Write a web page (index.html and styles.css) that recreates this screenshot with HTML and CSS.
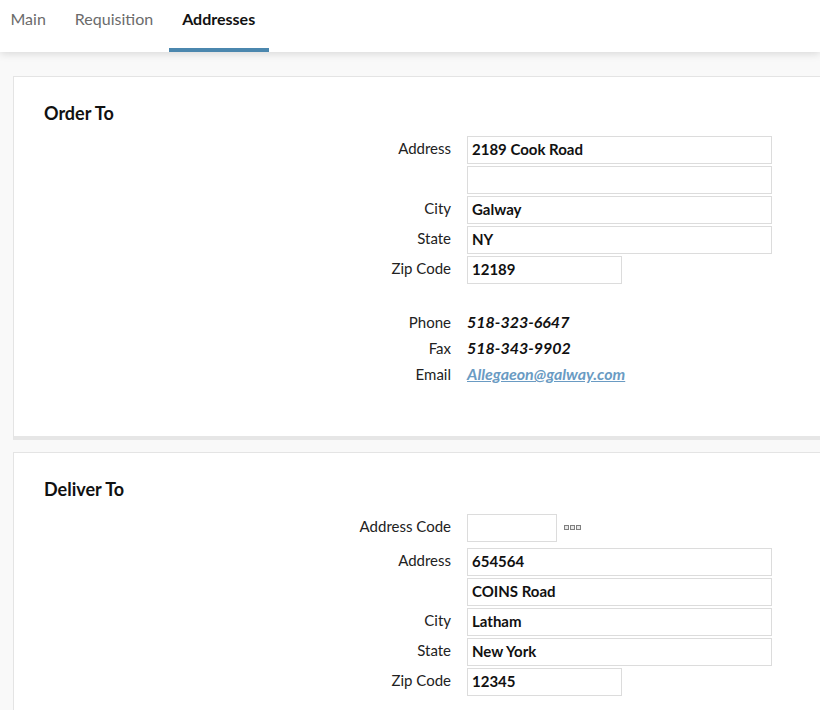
FILE: index.html
```html
<!DOCTYPE html>
<html lang="en">
<head>
<meta charset="utf-8">
<title>Addresses</title>
<link rel="stylesheet" href="styles.css">
</head>
<body>
<nav class="tabs">
  <a class="tab">Main</a>
  <a class="tab">Requisition</a>
  <a class="tab active">Addresses</a>
</nav>
<main class="page">
  <section class="card card-order">
    <h2 class="card-title">Order To</h2>
    <div class="form">
      <div class="row"><label class="lbl">Address</label><div class="field wide">2189 Cook Road</div></div>
      <div class="row"><label class="lbl"></label><div class="field wide"></div></div>
      <div class="row"><label class="lbl">City</label><div class="field wide">Galway</div></div>
      <div class="row"><label class="lbl">State</label><div class="field wide">NY</div></div>
      <div class="row"><label class="lbl">Zip Code</label><div class="field zip">12189</div></div>
    </div>
    <div class="contact">
      <div class="crow"><span class="lbl">Phone</span><span class="val">518-323-6647</span></div>
      <div class="crow"><span class="lbl">Fax</span><span class="val">518-343-9902</span></div>
      <div class="crow"><span class="lbl">Email</span><a class="val link">Allegaeon@galway.com</a></div>
    </div>
  </section>
  <section class="card card-deliver">
    <h2 class="card-title">Deliver To</h2>
    <div class="form">
      <div class="row code-row"><label class="lbl">Address Code</label><div class="field code"></div>
        <svg class="dots" width="18" height="6" viewBox="0 0 18 6"><rect x="0.5" y="0.5" width="4" height="4" fill="#e8e8e8" stroke="#808080"/><rect x="6.5" y="0.5" width="4" height="4" fill="#e8e8e8" stroke="#808080"/><rect x="12.5" y="0.5" width="4" height="4" fill="#e8e8e8" stroke="#808080"/></svg>
      </div>
      <div class="row"><label class="lbl">Address</label><div class="field wide">654564</div></div>
      <div class="row"><label class="lbl"></label><div class="field wide">COINS Road</div></div>
      <div class="row"><label class="lbl">City</label><div class="field wide">Latham</div></div>
      <div class="row"><label class="lbl">State</label><div class="field wide">New York</div></div>
      <div class="row"><label class="lbl">Zip Code</label><div class="field zip">12345</div></div>
    </div>
  </section>
</main>
</body>
</html>
```

FILE: styles.css
```css
html, body {
  margin: 0;
  padding: 0;
  background: #f9f9f9;
  overflow: hidden;
}
body {
  font-family: Lato, "Open Sans", sans-serif;
  color: #222;
}
.tabs {
  position: relative;
  z-index: 2;
  display: flex;
  gap: 2px;
  height: 52px;
  background: #fff;
  box-shadow: 0 2px 8px rgba(0, 0, 0, 0.13);
}
.tab {
  display: block;
  padding: 0 13.5px;
  font-size: 16px;
  line-height: 38px;
  color: #6b6b6b;
  border-bottom: 4px solid transparent;
  height: 48px;
}
.tab:first-child {
  padding-left: 10.5px;
}
.tab.active {
  color: #111;
  font-weight: bold;
  border-bottom-color: #4b87ae;
}
.page {
  padding-top: 24px;
}
.card {
  margin: 0 -20px 12px 13px;
  background: #fff;
  border: 1px solid #e4e4e4;
  padding: 25px 30px 40px 30px;
}
.card-order {
  border-bottom: 4px solid #e6e6e6;
  padding-bottom: 49px;
}
.card-title {
  margin: 0;
  font-size: 18px;
  line-height: 22px;
  font-weight: bold;
  color: #111;
}
.form {
  display: flow-root;
  margin-top: 12px;
}
.row {
  display: flex;
  align-items: center;
  gap: 16px;
  margin-bottom: 2px;
}
.row:last-child {
  margin-bottom: 0;
}
.row.code-row {
  margin: 2px 0 6px;
}
.lbl {
  width: 407px;
  flex: none;
  text-align: right;
  font-size: 15px;
  line-height: 26px;
  color: #222;
  align-self: flex-start;
}
.row .lbl {
  line-height: 24px;
}
.field {
  box-sizing: border-box;
  height: 28px;
  border: 1px solid #dcdcdc;
  padding: 0 4px;
  font-size: 15px;
  font-weight: bold;
  line-height: 24px;
  color: #111;
  background: #fff;
}
.field.wide { width: 305px; }
.field.zip { width: 155px; }
.field.code { width: 90px; }
.dots {
  margin-left: -9px;
  display: block;
}
.contact {
  margin-top: 25px;
}
.crow {
  display: flex;
  gap: 16px;
}
.val {
  font-size: 16px;
  line-height: 26px;
  font-style: italic;
  font-weight: bold;
  color: #111;
}
.val.link {
  color: #6a9bc3;
  text-decoration: underline;
}
```
